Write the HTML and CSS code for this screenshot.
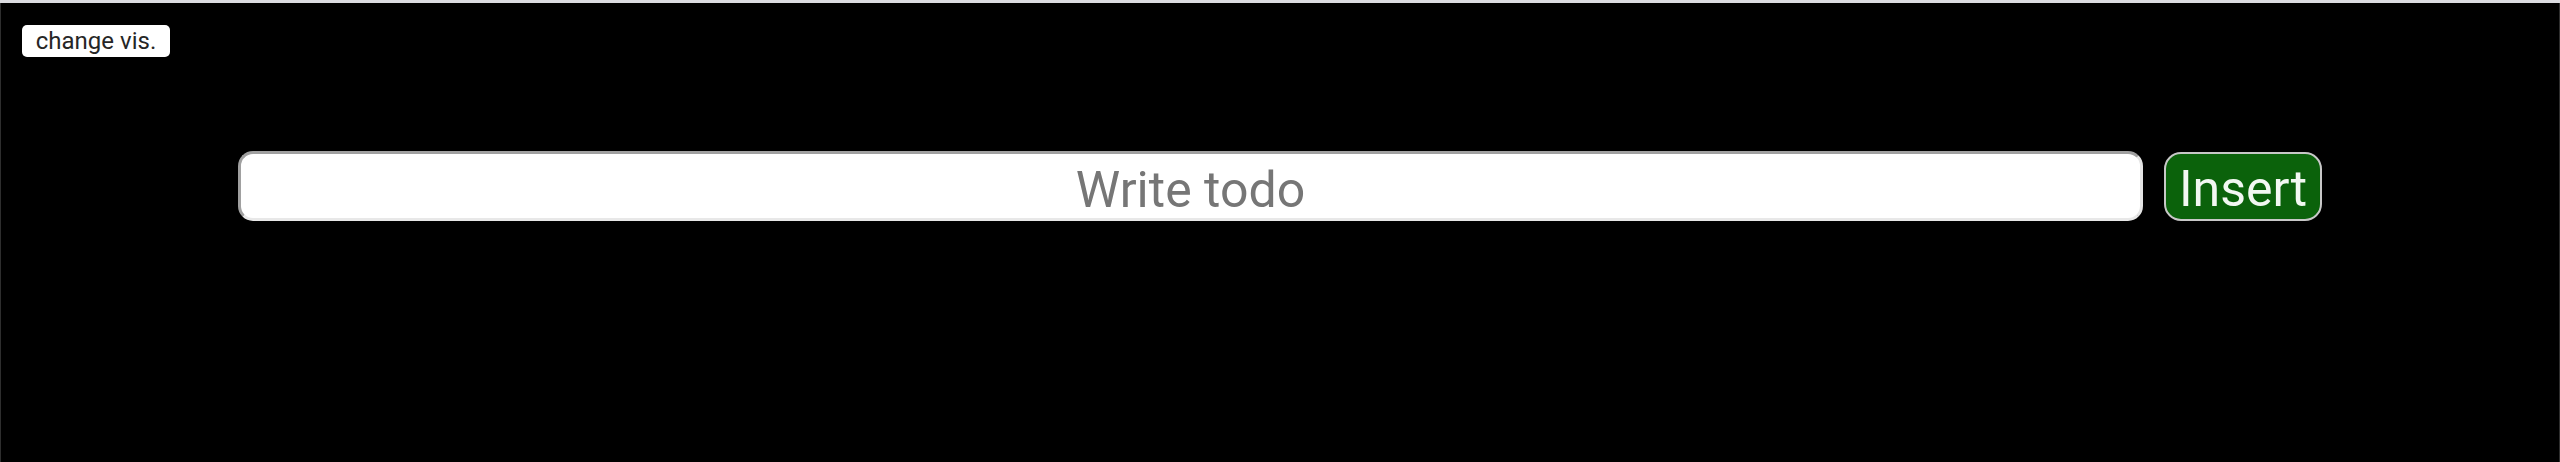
FILE: index.html
```html
<!DOCTYPE html>
<html lang="en">
<head>
<meta charset="utf-8">
<title>Todo</title>
<link rel="stylesheet" href="styles.css">
</head>
<body>
<div class="page">
  <div class="toolbar">
    <button class="vis-btn" type="button">change vis.</button>
  </div>
  <form class="todo-row">
    <input class="todo-input" type="text" placeholder="Write todo">
    <button class="insert-btn" type="button">Insert</button>
  </form>
</div>
</body>
</html>
```
FILE: styles.css
```css
html {
  background: #dcdce0;
}
body {
  margin: 0;
  font-family: Roboto, Inter, "Liberation Sans", sans-serif;
}
.page {
  margin-top: 3px;
  height: 459px;
  box-sizing: border-box;
  background: #000;
  border-left: 1px solid #2e2e2e;
  border-right: 1px solid #2e2e2e;
  padding: 22px 21px 0;
}
.toolbar {
  display: flex;
}
.vis-btn {
  width: 148px;
  height: 32px;
  padding: 1px 0 0;
  border: none;
  border-radius: 5px;
  background: #fff;
  color: #262626;
  font-family: Roboto, Inter, "Liberation Sans", sans-serif;
  font-size: 24px;
  line-height: 31px;
}
.todo-row {
  display: flex;
  justify-content: center;
  align-items: center;
  gap: 21px;
  margin: 94px 0 0;
}
.todo-input {
  width: 1905px;
  height: 70px;
  box-sizing: border-box;
  border: 3px solid #a0a0a0;
  border-right-color: #e4e4e4;
  border-bottom-color: #e8e8e8;
  border-radius: 15px;
  background: #fff;
  text-align: center;
  font-family: Roboto, Inter, "Liberation Sans", sans-serif;
  font-size: 50px;
  padding: 7px 10px 0;
  outline: none;
}
.todo-input::placeholder {
  color: #767676;
}
.insert-btn {
  width: 158px;
  height: 69px;
  box-sizing: border-box;
  border: 2px solid #c8c8c8;
  border-radius: 17px;
  background: #0b620b;
  color: #f2f8f2;
  font-family: Roboto, Inter, "Liberation Sans", sans-serif;
  font-size: 50px;
  padding: 6px 0 0;
  line-height: 1;
}
```
